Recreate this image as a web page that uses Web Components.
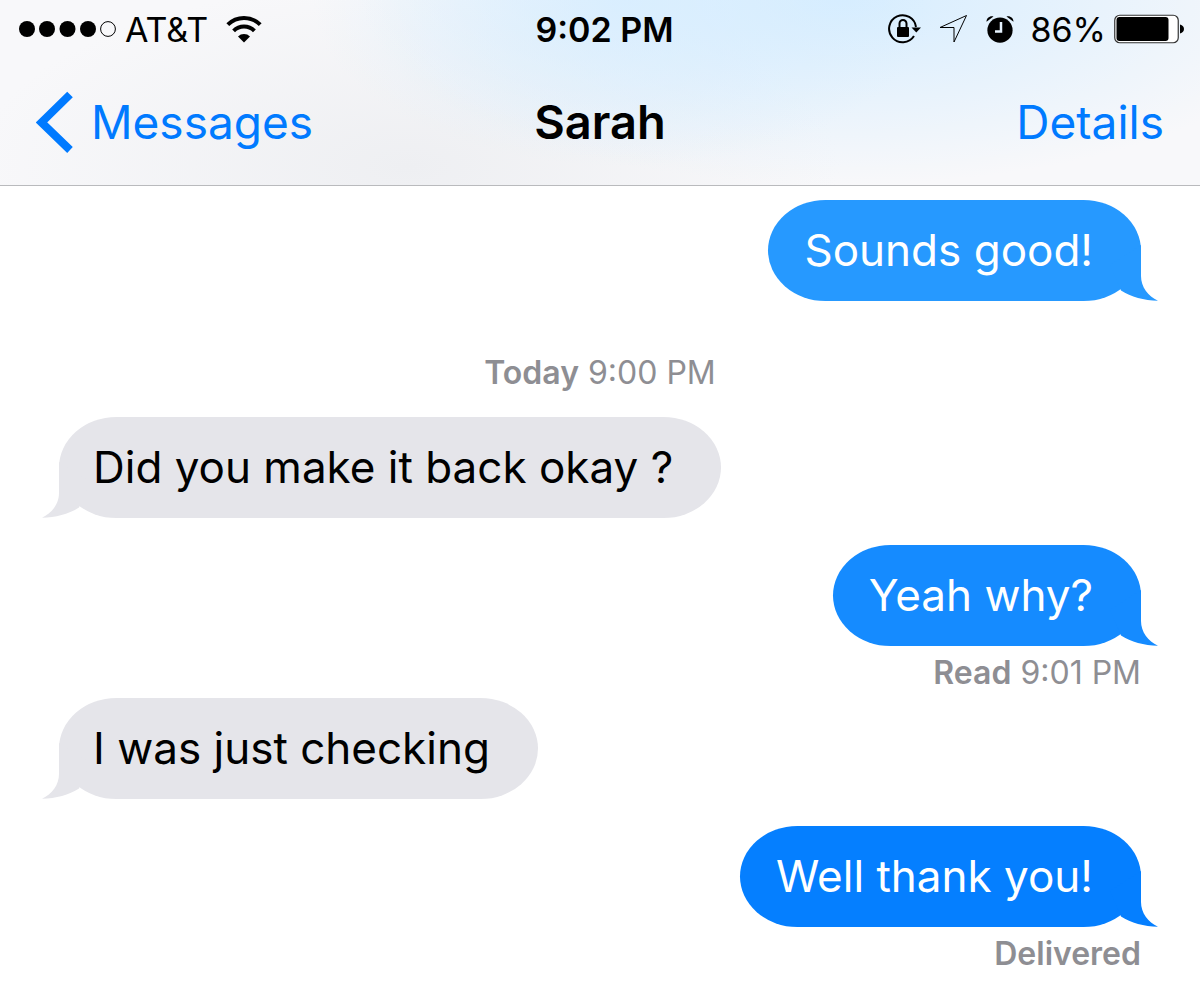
<!DOCTYPE html>
<html lang="en">
<head>
<meta charset="utf-8">
<meta name="viewport" content="width=device-width, initial-scale=1">
<title>Messages</title>
<style>
  body {
    margin: 0;
    background: #fff;
    color: #000;
    font-family: Inter, "Liberation Sans", sans-serif;
  }
</style>
</head>
<body>
<messages-app>
  <status-bar slot="header" carrier="AT&amp;T" time="9:02 PM" battery="86"></status-bar>
  <nav-bar slot="header">
    <span slot="back">Messages</span>
    Sarah
    <span slot="action">Details</span>
  </nav-bar>

  <chat-bubble from="me" shade="1">Sounds good!</chat-bubble>
  <chat-note kind="day"><b>Today</b> 9:00 PM</chat-note>
  <chat-bubble from="them">Did you make it back okay ?</chat-bubble>
  <chat-bubble from="me" shade="2">Yeah why?</chat-bubble>
  <chat-note kind="receipt"><b>Read</b> 9:01 PM</chat-note>
  <chat-bubble from="them">I was just checking</chat-bubble>
  <chat-bubble from="me" shade="3">Well thank you!</chat-bubble>
  <chat-note kind="receipt"><b>Delivered</b></chat-note>
</messages-app>

<script>
// page shell: translucent header on top, conversation below
class MessagesApp extends HTMLElement {
  constructor() {
    super();
    this.attachShadow({ mode: "open" });
  }

  connectedCallback() {
    this.shadowRoot.innerHTML = `
      <style>
        :host {
          display: block;
        }
        header {
          border-bottom: 1px solid #b9babd;
          background:
            radial-gradient(ellipse 26% 90% at 52% 0%, rgba(214, 237, 255, 0.8) 0%, rgba(214, 237, 255, 0) 100%),
            radial-gradient(ellipse 40% 100% at 70% 0%, #d6edff 0%, rgba(214, 237, 255, 0) 100%),
            radial-gradient(ellipse 36% 100% at 34% 90%, #eeeff2 0%, rgba(238, 239, 242, 0) 100%),
            #f8f8fa;
        }
        main {
          display: flex;
          flex-direction: column;
          padding: 14px 59px 12px;
        }
      </style>
      <header><slot name="header"></slot></header>
      <main><slot></slot></main>
    `;
  }
}

// signal, carrier, clock and battery
class StatusBar extends HTMLElement {
  constructor() {
    super();
    this.attachShadow({ mode: "open" });
  }

  connectedCallback() {
    const carrier = this.getAttribute("carrier");
    const time = this.getAttribute("time");
    const battery = Number(this.getAttribute("battery"));

    this.shadowRoot.innerHTML = `
      <style>
        :host {
          display: grid;
          grid-template-columns: 1fr auto 1fr;
          align-items: center;
          height: 60px;
          padding: 0 16px 0 19px;
          font-size: 34px;
          line-height: 40px;
        }
        .side {
          display: flex;
          align-items: center;
        }
        .left {
          gap: 8px;
        }
        .right {
          justify-content: flex-end;
          gap: 16px;
        }
        .power {
          display: flex;
          align-items: center;
          gap: 8px;
        }
        .clock {
          padding-left: 6px;
          font-weight: 600;
        }
        svg {
          display: block;
          flex: none;
          margin-bottom: 2px;
        }
        .wifi {
          margin-left: 10px;
        }
      </style>
      <div class="side left">
        <svg width="98" height="18" viewBox="0 0 98 18" aria-hidden="true">
          <circle cx="8" cy="9" r="8"/>
          <circle cx="28" cy="9" r="8"/>
          <circle cx="48.5" cy="9" r="8"/>
          <circle cx="69" cy="9" r="8"/>
          <circle cx="89" cy="9" r="7.4" fill="none" stroke="#000" stroke-width="1"/>
        </svg>
        <span>${carrier.replace("&", "&amp;")}</span>
        <svg class="wifi" width="36" height="28" viewBox="0 0 36 28" aria-hidden="true">
          <g fill="none" stroke="#000" stroke-width="4">
            <path d="M1.8 9.6a23 23 0 0 1 32.4 0"/>
            <path d="M7.6 15.8a14.8 14.8 0 0 1 20.8 0"/>
          </g>
          <path d="M18 27.5l-6-6a8.5 8.5 0 0 1 12 0z"/>
        </svg>
      </div>
      <div class="clock">${time}</div>
      <div class="side right">
        <svg width="34" height="30" viewBox="0 0 34 30" aria-hidden="true">
          <path d="M28 13A13.5 13.5 0 1 0 26 22" fill="none" stroke="#000" stroke-width="2"/>
          <path d="M23.5 13.5h9.5l-4.7 5z"/>
          <rect x="9" y="13" width="12" height="10" rx="1"/>
          <path d="M11.5 14V9.5a3.5 3.5 0 0 1 7 0V14" fill="none" stroke="#000" stroke-width="2"/>
        </svg>
        <svg width="32" height="30" viewBox="0 0 32 30" aria-hidden="true">
          <path d="M28.5 1.500L2 13.500h14V28z" fill="none" stroke="#000" stroke-width="1"/>
        </svg>
        <svg width="28" height="28" viewBox="0 0 28 28" aria-hidden="true">
          <circle cx="14" cy="15.2" r="12.6"/>
          <path d="M.5 6.800C.6 3 3.500.6 7.500 1.400zM27.500 6.800C27.400 3 24.500.6 20.500 1.400z"/>
          <path d="M15 7v9.500H9" fill="none" stroke="#e6f3ff" stroke-width="2.5"/>
        </svg>
        <span class="power">
          <span>${battery}%</span>
          <svg width="70" height="30" viewBox="0 0 70 30" aria-hidden="true">
            <rect x=".75" y="1.25" width="63.500" height="27.500" rx="5" fill="#fff" stroke="#333" stroke-width="1.2"/>
            <rect x="2.5" y="3" width="${Math.round(battery * 0.605)}" height="24" rx="3"/>
            <path d="M66 10.500c2.700.8 4 2.500 4 4.500s-1.300 3.700-4 4.500z"/>
          </svg>
        </span>
      </div>
    `;
  }
}

// back link, title, action link
class NavBar extends HTMLElement {
  constructor() {
    super();
    this.attachShadow({ mode: "open" });
  }

  connectedCallback() {
    this.shadowRoot.innerHTML = `
      <style>
        :host {
          display: grid;
          grid-template-columns: 1fr auto 1fr;
          align-items: center;
          box-sizing: border-box;
          height: 125px;
          padding: 0 36px 2px;
          font-size: 46px;
          line-height: 56px;
        }
        a {
          color: #007aff;
          text-decoration: none;
        }
        .back {
          display: flex;
          align-items: center;
          gap: 18px;
        }
        .action {
          justify-self: end;
        }
        h1 {
          margin: 0;
          font-size: 47px;
          font-weight: 600;
        }
        svg {
          display: block;
        }
      </style>
      <a class="back" href="#messages">
        <svg width="37" height="62" viewBox="0 0 37 62" aria-hidden="true">
          <path d="M34 3.500L5.500 31.500l28.500 27.500" fill="none" stroke="#007aff" stroke-width="8"/>
        </svg>
        <slot name="back"></slot>
      </a>
      <h1><slot></slot></h1>
      <a class="action" href="#details"><slot name="action"></slot></a>
    `;
  }
}

// one message, tail drawn over the bottom corner
class ChatBubble extends HTMLElement {
  constructor() {
    super();
    this.attachShadow({ mode: "open" });
  }

  connectedCallback() {
    this.shadowRoot.innerHTML = `
      <style>
        :host {
          --fill: #e5e5ea;
          position: relative;
          display: block;
          align-self: flex-start;
          margin-bottom: 27px;
          padding: 22px 48px 23px 34px;
          border-radius: 58px / 51px;
          background: var(--fill);
          font-size: 44px;
          line-height: 56px;
        }
        :host([from="me"]) {
          align-self: flex-end;
          margin-bottom: 0;
          padding-left: 36px;
          color: #fff;
        }
        :host([shade="1"]) { --fill: #2699ff; }
        :host([shade="2"]) { --fill: #158bff; }
        :host([shade="3"]) { --fill: #057fff; }
        svg {
          position: absolute;
          bottom: 0;
          left: -17px;
          transform: scaleX(-1);
          fill: var(--fill);
        }
        :host([from="me"]) svg {
          left: auto;
          right: -17px;
          transform: none;
        }
      </style>
      <slot></slot>
      <svg width="58" height="56" viewBox="0 0 58 56" aria-hidden="true">
        <path d="M41 0V31C41 42 48 51 58 55.700C44 55.500 31 52 21 45.500L10 20Z"/>
      </svg>
    `;
  }
}

// day heading or delivery receipt
class ChatNote extends HTMLElement {
  constructor() {
    super();
    this.attachShadow({ mode: "open" });
  }

  connectedCallback() {
    this.shadowRoot.innerHTML = `
      <style>
        :host {
          display: block;
          color: #8e8e93;
          font-size: 32px;
          line-height: 40px;
        }
        :host([kind="day"]) {
          margin: 52px 0 24px;
          text-align: center;
        }
        :host([kind="receipt"]) {
          margin: 7px 0 5px;
          text-align: right;
        }
        ::slotted(b) {
          font-weight: 600;
        }
      </style>
      <slot></slot>
    `;
  }
}

customElements.define("messages-app", MessagesApp);
customElements.define("status-bar", StatusBar);
customElements.define("nav-bar", NavBar);
customElements.define("chat-bubble", ChatBubble);
customElements.define("chat-note", ChatNote);
</script>
</body>
</html>
